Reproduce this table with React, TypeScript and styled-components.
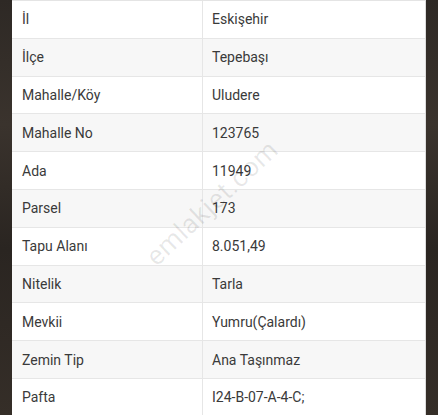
import React from "react";
import styled, { createGlobalStyle } from "styled-components";

const Global = createGlobalStyle`
  html, body { margin: 0; padding: 0; }
  body {
    width: 438px;
    height: 415px;
    overflow: hidden;
    font-family: Roboto, "Noto Sans", sans-serif;
    background: linear-gradient(180deg, #2e2925 0%, #3a332d 30%, #2a2521 60%, #352e28 100%);
  }
`;

const Page = styled.div`
  width: 438px;
  height: 415px;
  padding: 0 12px 0 12px;
  box-sizing: border-box;
  position: relative;
  overflow: hidden;
`;

const Table = styled.div`
  width: 414px;
  background: #ffffff;
  border-top: 1px solid #e4e4e4;
  border-right: 1px solid #dcdcdc;
  box-sizing: border-box;
  position: relative;
`;

const Row = styled.div<{ $alt: boolean }>`
  display: grid;
  grid-template-columns: 191px 1fr;
  height: 37.8px;
  box-sizing: border-box;
  border-bottom: 1px solid #e6e6e6;
  background: ${(p) => (p.$alt ? "#f7f7f7" : "#ffffff")};
`;

const Cell = styled.div<{ $first?: boolean }>`
  display: flex;
  align-items: center;
  padding-left: ${(p) => (p.$first ? "10px" : "9px")};
  font-size: 14px;
  color: #3a3a3a;
  border-right: ${(p) => (p.$first ? "1px solid #e6e6e6" : "none")};
  white-space: nowrap;
`;

const Watermark = styled.div`
  position: absolute;
  left: 212px;
  top: 203px;
  transform: translate(-50%, -50%) rotate(-43deg);
  font-family: Roboto, sans-serif;
  font-size: 27px;
  color: rgba(0, 0, 0, 0.09);
  pointer-events: none;
  white-space: nowrap;
  letter-spacing: 0.5px;
`;

const rows: [string, string][] = [
  ["İl", "Eskişehir"],
  ["İlçe", "Tepebaşı"],
  ["Mahalle/Köy", "Uludere"],
  ["Mahalle No", "123765"],
  ["Ada", "11949"],
  ["Parsel", "173"],
  ["Tapu Alanı", "8.051,49"],
  ["Nitelik", "Tarla"],
  ["Mevkii", "Yumru(Çalardı)"],
  ["Zemin Tip", "Ana Taşınmaz"],
  ["Pafta", "I24-B-07-A-4-C;"],
];

export default function App() {
  return (
    <>
      <Global />
      <Page>
        <Table>
          {rows.map(([k, v], i) => (
            <Row key={k} $alt={i % 2 === 1}>
              <Cell $first>{k}</Cell>
              <Cell>{v}</Cell>
            </Row>
          ))}
        </Table>
        <Watermark>emlakjet.com</Watermark>
      </Page>
    </>
  );
}
